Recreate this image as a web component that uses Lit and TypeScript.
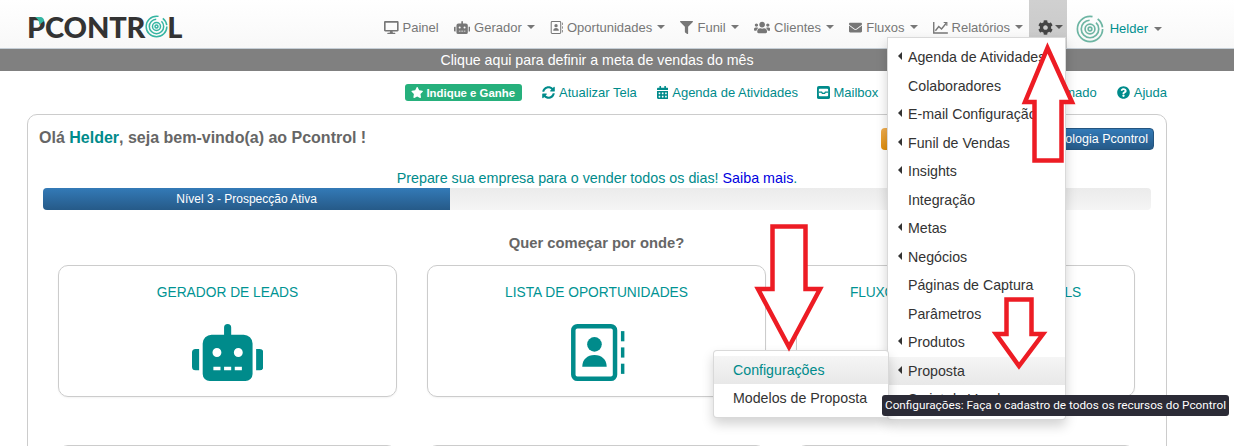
import { LitElement, html, css, svg } from "lit";
import { customElement } from "lit/decorators.js";

const ic = (vb: string, d: string, cls = "ic") =>
  html`<svg class=${cls} viewBox=${vb} fill="currentColor"><path d=${d}></path></svg>`;

const ROBOT = "M32,224H64V416H32A31.96166,31.96166,0,0,1,0,384V256A31.96166,31.96166,0,0,1,32,224Zm512-48V448a64.06328,64.06328,0,0,1-64,64H160a64.06328,64.06328,0,0,1-64-64V176a79.974,79.974,0,0,1,80-80H288V32a32,32,0,0,1,64,0V96H464A79.974,79.974,0,0,1,544,176ZM264,256a40,40,0,1,0-40,40A39.997,39.997,0,0,0,264,256Zm-8,128H192v32h64Zm96,0H288v32h64ZM456,256a40,40,0,1,0-40,40A39.997,39.997,0,0,0,456,256Zm-8,128H384v32h64ZM640,256V384a31.96166,31.96166,0,0,1-32,32H576V224h32A31.96166,31.96166,0,0,1,640,256Z";
const DESKTOP = "M528 0H48C21.5 0 0 21.5 0 48v320c0 26.5 21.5 48 48 48h192l-16 48h-72c-13.3 0-24 10.7-24 24s10.7 24 24 24h272c13.3 0 24-10.7 24-24s-10.7-24-24-24h-72l-16-48h192c26.5 0 48-21.5 48-48V48c0-26.5-21.5-48-48-48zm-16 352H64V64h448v288z";
const FILTER = "M487.976 0H24.028C2.71 0-8.047 25.866 7.058 40.971L192 225.941V432c0 7.831 3.821 15.17 10.237 19.662l80 55.98C298.02 518.69 320 507.493 320 487.98V225.941l184.947-184.97C520.021 25.896 509.338 0 487.976 0z";
const USERS = "M96 224c35.3 0 64-28.7 64-64s-28.7-64-64-64-64 28.7-64 64 28.7 64 64 64zm448 0c35.3 0 64-28.7 64-64s-28.7-64-64-64-64 28.7-64 64 28.7 64 64 64zm32 32h-64c-17.6 0-33.5 7.1-45.1 18.6 40.3 22.1 68.9 62 75.1 109.4h66c17.7 0 32-14.3 32-32v-32c0-35.3-28.7-64-64-64zm-256 0c61.9 0 112-50.1 112-112S381.9 32 320 32 208 82.1 208 144s50.1 112 112 112zm76.8 32h-8.3c-20.8 10-43.9 16-68.5 16s-47.6-6-68.5-16h-8.3C179.6 288 128 339.6 128 403.2V432c0 26.5 21.5 48 48 48h288c26.5 0 48-21.5 48-48v-28.8c0-63.6-51.6-115.2-115.2-115.2zm-223.7-13.4C161.5 263.1 145.6 256 128 256H64c-35.3 0-64 28.7-64 64v32c0 17.7 14.3 32 32 32h65.9c6.3-47.4 34.9-87.3 75.2-109.4z";
const ENVELOPE = "M502.3 190.8c3.9-3.1 9.7-.2 9.7 4.7V400c0 26.5-21.5 48-48 48H48c-26.5 0-48-21.5-48-48V195.6c0-5 5.7-7.8 9.7-4.7 22.4 17.4 52.1 39.5 154.1 113.6 21.1 15.4 56.7 47.8 92.2 47.6 35.7.3 72-32.8 92.3-47.6 102-74.1 131.6-96.3 154-113.7zM256 320c23.2.4 56.6-29.2 73.4-41.4 132.7-96.3 142.8-104.7 173.4-128.7 5.8-4.5 9.2-11.5 9.2-18.9v-19c0-26.5-21.5-48-48-48H48C21.5 64 0 85.5 0 112v19c0 7.4 3.4 14.3 9.2 18.9 30.6 23.9 40.7 32.4 173.4 128.7 16.8 12.2 50.2 41.8 73.4 41.4z";
const COG = "M487.4 315.7l-42.6-24.6c4.3-23.2 4.3-47 0-70.2l42.6-24.6c4.9-2.8 7.1-8.6 5.5-14-11.1-35.6-30-67.8-54.7-94.6-3.8-4.1-10-5.1-14.8-2.3L380.8 110c-17.9-15.4-38.5-27.3-60.8-35.1V25.8c0-5.6-3.9-10.5-9.4-11.7-36.7-8.2-74.3-7.8-109.2 0-5.5 1.2-9.4 6.1-9.4 11.7V75c-22.2 7.9-42.8 19.8-60.8 35.1L88.7 85.5c-4.9-2.8-11-1.9-14.8 2.3-24.7 26.7-43.6 58.9-54.7 94.6-1.7 5.4.6 11.2 5.5 14L67.3 221c-4.3 23.2-4.3 47 0 70.2l-42.6 24.6c-4.9 2.8-7.1 8.6-5.5 14 11.1 35.6 30 67.8 54.7 94.6 3.8 4.1 10 5.1 14.8 2.3l42.6-24.6c17.9 15.4 38.5 27.3 60.8 35.1v49.2c0 5.6 3.9 10.5 9.4 11.7 36.7 8.2 74.3 7.8 109.2 0 5.5-1.2 9.4-6.1 9.4-11.7v-49.2c22.2-7.9 42.8-19.8 60.8-35.1l42.6 24.6c4.9 2.8 11 1.9 14.8-2.3 24.7-26.7 43.6-58.9 54.7-94.6 1.5-5.5-.7-11.3-5.6-14.1zM256 336c-44.1 0-80-35.9-80-80s35.9-80 80-80 80 35.9 80 80-35.9 80-80 80z";
const SYNC = "M370.72 133.28C339.458 104.008 298.888 87.962 255.848 88c-77.458.068-144.328 53.178-162.791 126.85-1.344 5.363-6.122 9.15-11.651 9.15H24.103c-7.498 0-13.194-6.807-11.807-14.176C33.933 94.924 134.813 8 256 8c66.448 0 126.791 26.136 171.315 68.685L463.03 40.97C478.149 25.851 504 36.559 504 57.941V192c0 13.255-10.745 24-24 24H345.941c-21.382 0-32.09-25.851-16.971-40.971l41.75-41.749zM32 296h134.059c21.382 0 32.09 25.851 16.971 40.971l-41.75 41.75c31.262 29.273 71.835 45.319 114.876 45.28 77.418-.07 144.315-53.144 162.787-126.849 1.344-5.363 6.122-9.15 11.651-9.15h57.304c7.498 0 13.194 6.807 11.807 14.176C478.067 417.076 377.187 504 256 504c-66.448 0-126.791-26.136-171.315-68.685L48.97 471.03C33.851 486.149 8 475.441 8 454.059V320c0-13.255 10.745-24 24-24z";
const STAR = "M259.3 17.8L194 150.2 47.9 171.5c-26.2 3.8-36.7 36.1-17.7 54.6l105.7 103-25 145.5c-4.5 26.3 23.2 46 46.4 33.7L288 439.6l130.7 68.7c23.2 12.2 50.9-7.4 46.4-33.7l-25-145.5 105.7-103c19-18.5 8.5-50.8-17.7-54.6L382 150.2 316.7 17.8c-11.7-23.6-45.6-23.9-57.4 0z";
const QUESTION = "M504 256c0 136.997-111.043 248-248 248S8 392.997 8 256C8 119.083 119.043 8 256 8s248 111.083 248 248zM262.655 90c-54.497 0-89.255 22.957-116.549 63.758-3.536 5.286-2.353 12.415 2.715 16.258l34.699 26.31c5.205 3.947 12.621 3.008 16.665-2.122 17.864-22.658 30.113-35.797 57.303-35.797 20.429 0 45.698 13.148 45.698 32.958 0 14.976-12.363 22.667-32.534 33.976C247.128 238.528 216 254.941 216 296v4c0 6.627 5.373 12 12 12h56c6.627 0 12-5.373 12-12v-1.333c0-28.462 83.186-29.647 83.186-106.667 0-58.002-60.165-102-116.531-102zM256 338c-25.365 0-46 20.635-46 46 0 25.364 20.635 46 46 46s46-20.636 46-46c0-25.365-20.635-46-46-46z";
const CALENDAR = "M0 464c0 26.5 21.5 48 48 48h352c26.5 0 48-21.5 48-48V192H0v272zm320-196c0-6.6 5.4-12 12-12h40c6.6 0 12 5.4 12 12v40c0 6.6-5.4 12-12 12h-40c-6.6 0-12-5.4-12-12v-40zm0 128c0-6.6 5.4-12 12-12h40c6.6 0 12 5.4 12 12v40c0 6.6-5.4 12-12 12h-40c-6.6 0-12-5.4-12-12v-40zM192 268c0-6.6 5.4-12 12-12h40c6.6 0 12 5.4 12 12v40c0 6.6-5.4 12-12 12h-40c-6.6 0-12-5.4-12-12v-40zm0 128c0-6.6 5.4-12 12-12h40c6.6 0 12 5.4 12 12v40c0 6.6-5.4 12-12 12h-40c-6.6 0-12-5.4-12-12v-40zM64 268c0-6.6 5.4-12 12-12h40c6.6 0 12 5.4 12 12v40c0 6.6-5.4 12-12 12H76c-6.6 0-12-5.4-12-12v-40zm0 128c0-6.6 5.4-12 12-12h40c6.6 0 12 5.4 12 12v40c0 6.6-5.4 12-12 12H76c-6.6 0-12-5.4-12-12v-40zM400 64h-48V16c0-8.8-7.2-16-16-16h-32c-8.8 0-16 7.2-16 16v48H160V16c0-8.8-7.2-16-16-16h-32c-8.8 0-16 7.2-16 16v48H48C21.5 64 0 85.5 0 112v48h448v-48c0-26.5-21.5-48-48-48z";

const bookIcon = (cls: string) => html`<svg class=${cls} viewBox="-3 0 56 56" fill="currentColor">
  <rect x="2.2" y="2.2" width="41" height="51.6" rx="4" fill="none" stroke="currentColor" stroke-width="4.4"></rect>
  <circle cx="23" cy="20" r="7.2"></circle>
  <path d="M11 42c0-7 5-11.5 12-11.5S35 35 35 42z"></path>
  <rect x="49" y="7" width="3.4" height="10"></rect><rect x="49" y="23" width="3.4" height="10"></rect><rect x="49" y="39" width="3.4" height="10"></rect>
</svg>`;

const chartIcon = html`<svg class="ic" viewBox="0 0 16 14" fill="none" stroke="currentColor" stroke-width="1.5">
  <path d="M.8 1v11.9H16"></path><path d="M2.6 10.5 6.2 6l3 2.6L14.2 2.4"></path><path d="M11.5 1.6h3.4V5" stroke-width="1.3"></path>
</svg>`;

const mailSquare = html`<svg class="ic" viewBox="0 0 14 14">
  <rect width="14" height="14" rx="2" fill="currentColor"></rect>
  <rect x="2" y="3" width="10" height="8" rx="1" fill="#fff"></rect>
  <path d="M2 6.6h3l.8 1.4h2.4l.8-1.4h3" fill="none" stroke="currentColor" stroke-width="1.4"></path>
</svg>`;

const ringLogo = (cls: string, stroke: string, w = 2.2) => html`<svg class=${cls} viewBox="0 0 40 40" fill="none" stroke=${stroke} stroke-width=${w}>
  <circle cx="20" cy="20" r="18" stroke-dasharray="88 8 14 3"></circle>
  <circle cx="20" cy="20" r="12.5" stroke-dasharray="58 10 10 2"></circle>
  <circle cx="20" cy="20" r="7"></circle>
  <circle cx="20" cy="20" r="2.6"></circle>
</svg>`;

type NavItem = { icon: unknown; label: string; caret: boolean };

@customElement("app-root")
export class AppRoot extends LitElement {
  static styles = css`
    :host { display: block; position: relative; width: 1234px; height: 446px; overflow: hidden; background: #fff;
      font-family: "Liberation Sans", Arial, sans-serif; font-size: 13px; color: #333; }
    .ic { height: 13px; width: auto; display: block; flex: none; }
    .navbar { display: flex; align-items: stretch; height: 48px; background: linear-gradient(#fff, #f8f8f8);
      border-bottom: 1px solid #c5ced6; box-sizing: content-box; padding-left: 27px; padding-right: 72px; }
    .logo { display: flex; align-items: center; position: relative; font-family: Lato, sans-serif; font-weight: 900;
      font-size: 29px; line-height: 1; color: #333; letter-spacing: -0.15px; padding-top: 5px; }
    .logo .ring { width: 23px; height: 23px; margin: 0 -1px 0 0; }
    .leaf { position: absolute; left: 8px; top: 17px; width: 9px; height: 8px; }
    .nav { display: flex; align-items: stretch; margin-left: auto; }
    .item { display: flex; align-items: center; gap: 4px; padding: 6px 7.6px 0; color: #777; }
    .caret { width: 0; height: 0; border-top: 4px solid currentColor; border-left: 4px solid transparent; border-right: 4px solid transparent; margin-left: 1px; }
    .gear { background: linear-gradient(#d0d0d0, #c8c8c8); color: #444; margin: 0 0 0 -2px; padding: 6px 4px 0 9px; gap: 2px; }
    .gear .ic { height: 15px; }
    .gear .caret { color: #555; margin: 0; }
    .user { display: flex; align-items: center; gap: 6px; padding: 9px 0 0 9px; color: #009090; }
    .user .avatar { width: 28px; height: 28px; }
    .user .caret { color: #777; margin-left: 0; }
    .goal { height: 22px; line-height: 22px; background: #808080; color: #fff; text-align: center; font-size: 14.2px; padding-right: 40px; }
    .main { padding: 0 67px 0 27px; }
    .links { display: flex; justify-content: flex-end; align-items: center; gap: 20px; height: 43px; color: #008b8b; }
    .link { display: flex; align-items: center; gap: 4px; white-space: nowrap; }
    .link.mail { margin-left: -1.5px; }
    .spacer { width: 91px; }
    .badge { display: flex; align-items: center; gap: 3px; height: 17px; padding: 0 7px 0 6px; background: #26b07c; color: #fff; border-radius: 3px; font-weight: 700; font-size: 11.4px; }
    .badge .ic { height: 11px; }
    .panel { border: 1px solid #ccc; border-radius: 10px; height: 400px; padding: 0 12px 0 11px; box-sizing: border-box; }
    .head { display: flex; justify-content: space-between; align-items: center; padding-top: 13px; height: 35px; box-sizing: border-box; }
    .hello { font-weight: 700; font-size: 16px; color: #666; margin-top: -2px; }
    .hello b { color: #008b8b; }
    .btns { display: flex; gap: 4px; }
    .btn { height: 22px; line-height: 20px; border-radius: 4px; color: #fff; padding: 0 5px; font-size: 12.5px; white-space: nowrap; }
    .orange { background: linear-gradient(#f0ad4e, #e08e0b); width: 140px; padding: 0; }
    .blue { background: linear-gradient(#337ab7, #265a88); border: 1px solid #245580; box-sizing: border-box; }
    .prep { text-align: center; color: #008b8b; margin: 18px 0 0 1px; line-height: 20px; font-size: 14.3px; }
    .prep a { color: #0000e0; }
    .bar { height: 22px; margin: 0 3px 0 4px; background: linear-gradient(#ebebeb, #f5f5f5); border-radius: 4px; overflow: hidden; }
    .fill { width: 36.75%; height: 100%; background: linear-gradient(#337ab7, #265a88); color: #fff; font-size: 12px; line-height: 22px; text-align: center; }
    .where { text-align: center; font-weight: 700; font-size: 14.75px; color: #666; margin-top: 23px; line-height: 20px; }
    .cards { display: grid; grid-template-columns: repeat(3, 339px); column-gap: 30px; row-gap: 48px; margin: 12px 0 0 19px; }
    .card { height: 132px; border: 1px solid #ccc; border-radius: 10px; box-sizing: border-box; box-shadow: 0 1px 2px rgba(0,0,0,.05); color: #009393; font-size: 13.75px; text-align: center; padding-top: 18px; line-height: 17px; }
    .card.long { letter-spacing: -0.17px; }
    .card svg { display: block; margin: 23px auto 0; color: #008b8b; height: 57px; width: auto; }
    .overlay-menu { position: absolute; background: #fff; border: 1px solid rgba(0,0,0,.15); border-radius: 0 0 4px 4px; box-shadow: 0 6px 12px rgba(0,0,0,.175); box-sizing: border-box; padding: 5px 0; }
    .mi { height: 28.5px; display: flex; align-items: center; padding-left: 20px; position: relative; color: #333; font-size: 14.2px; white-space: nowrap; }
    .mi.sub::before { content: ""; position: absolute; left: 10px; top: 9px; border-right: 4px solid #333; border-top: 4px solid transparent; border-bottom: 4px solid transparent; }
    .mi.hov { background: linear-gradient(#f5f5f5, #e8e8e8); }
    .menu { left: 887px; top: 37px; width: 179px; }
    .submenu { left: 713px; top: 350px; width: 176px; border-radius: 4px; }
    .submenu .mi { height: 28px; padding-left: 19px; }
    .submenu .mi.teal { color: #008b8b; }
    .tip { position: absolute; left: 882px; top: 395px; height: 21px; line-height: 20px; background: #2b2b36; color: #fff; border-radius: 3px; padding: 0 3px; font-family: Roboto, sans-serif; font-size: 11.75px; white-space: nowrap; }
    .arrows { position: absolute; inset: 0; width: 1234px; height: 446px; pointer-events: none; }
  `;

  private nav: NavItem[] = [
    { icon: ic("0 0 576 512", DESKTOP), label: "Painel", caret: false },
    { icon: ic("0 0 640 512", ROBOT), label: "Gerador", caret: true },
    { icon: bookIcon("ic"), label: "Oportunidades", caret: true },
    { icon: ic("0 0 512 512", FILTER), label: "Funil", caret: true },
    { icon: ic("0 0 640 512", USERS), label: "Clientes", caret: true },
    { icon: ic("0 0 512 512", ENVELOPE), label: "Fluxos", caret: true },
    { icon: chartIcon, label: "Relatórios", caret: true },
  ];

  private menu: [string, boolean][] = [
    ["Agenda de Atividades", true], ["Colaboradores", false], ["E-mail Configuração", true], ["Funil de Vendas", true],
    ["Insights", true], ["Integração", false], ["Metas", true], ["Negócios", true], ["Páginas de Captura", false],
    ["Parâmetros", false], ["Produtos", true], ["Proposta", true], ["Script de Vendas", false],
  ];

  render() {
    return html`
      <header class="navbar">
        <div class="logo">
          <span>PCONTR</span>${ringLogo("ring", "#35b5a2", 2.6)}<span>L</span>
          <svg class="leaf" viewBox="0 0 9 8"><path d="M0 0h5c3 0 4 2 4 4L4 8C5 5 3 2 0 0z" fill="#35b5a2"></path></svg>
        </div>
        <nav class="nav">
          ${this.nav.map((n) => html`<div class="item">${n.icon}<span>${n.label}</span>${n.caret ? html`<i class="caret"></i>` : ""}</div>`)}
          <div class="item gear">${ic("0 0 512 512", COG)}<i class="caret"></i></div>
          <div class="user">${ringLogo("avatar", "#6db5a3", 2.4)}<span>Helder</span><i class="caret"></i></div>
        </nav>
      </header>
      <div class="goal">Clique aqui para definir a meta de vendas do mês</div>
      <main class="main">
        <div class="links">
          <span class="badge">${ic("0 0 576 512", STAR)}Indique e Ganhe</span>
          <span class="link">${ic("0 0 512 512", SYNC)}Atualizar Tela</span>
          <span class="link">${ic("0 0 448 512", CALENDAR)}Agenda de Atividades</span>
          <span class="link mail">${mailSquare}Mailbox</span>
          <span class="spacer"></span>
          <span class="link">Abrir Chamado</span>
          <span class="link">${ic("0 0 512 512", QUESTION)}Ajuda</span>
        </div>
        <section class="panel">
          <div class="head">
            <div class="hello">Olá <b>Helder</b>, seja bem-vindo(a) ao Pcontrol !</div>
            <div class="btns"><span class="btn orange"></span><span class="btn blue">Metodologia Pcontrol</span></div>
          </div>
          <p class="prep">Prepare sua empresa para o vender todos os dias! <a>Saiba mais</a>.</p>
          <div class="bar"><div class="fill">Nível 3 - Prospecção Ativa</div></div>
          <div class="where">Quer começar por onde?</div>
          <div class="cards">
            <div class="card">GERADOR DE LEADS${ic("0 0 640 512", ROBOT, "big")}</div>
            <div class="card">LISTA DE OPORTUNIDADES${bookIcon("big")}</div>
            <div class="card long">FLUXOS AUTOMÁTICOS DE EMAILS</div>
            <div class="card"></div><div class="card"></div><div class="card"></div>
          </div>
        </section>
      </main>
      <div class="overlay-menu menu">
        ${this.menu.map(([t, s]) => html`<div class="mi ${s ? "sub" : ""} ${t === "Proposta" ? "hov" : ""}">${t}</div>`)}
      </div>
      <div class="overlay-menu submenu">
        <div class="mi hov teal">Configurações</div>
        <div class="mi">Modelos de Proposta</div>
      </div>
      <svg class="arrows" viewBox="0 0 1234 446" fill="#fff" stroke="#ed1c24" stroke-width="4.5" stroke-linejoin="miter">
        ${svg`<path d="M1047.5 48 1072 102H1061.5V160.5H1034.5V102H1025Z"></path>
        <path d="M772.5 226.5H805.5V289H820L789 347 758 289H772.5Z"></path>
        <path d="M1006.5 299.5H1031.5V334H1043L1019 366 996 334H1006.5Z"></path>`}
      </svg>
      <div class="tip">Configurações: Faça o cadastro de todos os recursos do Pcontrol</div>
    `;
  }
}
